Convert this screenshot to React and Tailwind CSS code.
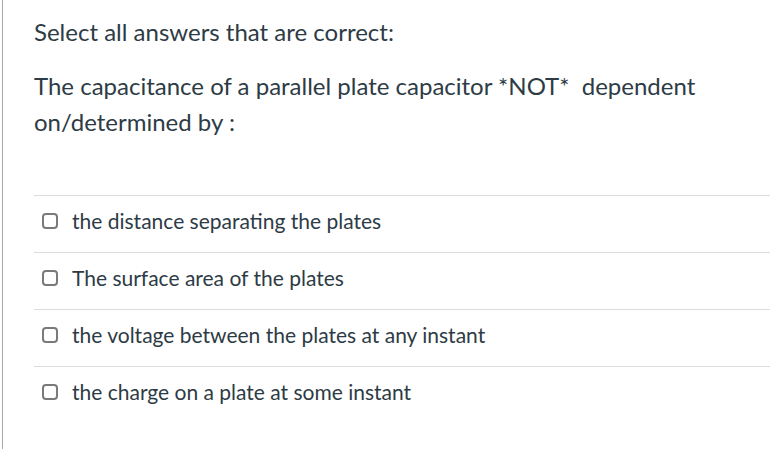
export default function App() {
  const opts = [
    "the distance separating the plates",
    "The surface area of the plates",
    "the voltage between the plates at any instant",
    "the charge on a plate at some instant",
  ];
  return (
    <div className="w-[770px] h-[449px] bg-white overflow-hidden" style={{ fontFamily: "Lato, 'Open Sans', sans-serif" }}>
      <div className="ml-[2px] h-full border-l border-[#a9a9a9] pl-[31px] pt-[16px] text-[#2d3b45]">
        <div className="text-[24px] leading-[32px]">Select all answers that are correct:</div>
        <div className="mt-[20px] text-[24px] leading-[36px] w-[700px]">
          The capacitance of a parallel plate capacitor *NOT*&nbsp; dependent on/determined by :
        </div>
        <div className="mt-[55px]">
          {opts.map((o) => (
            <div key={o} className="border-t border-[#dcdcdc] h-[57px] pt-[12px] pl-[8px]">
              <div className="flex items-center h-[26px]">
                <span className="w-[16px] h-[16px] border-2 border-[#7a7a7a] rounded-[4px] shrink-0 box-border" />
                <span className="ml-[14px] text-[21px] leading-[26px]">{o}</span>
              </div>
            </div>
          ))}
        </div>
      </div>
    </div>
  );
}
